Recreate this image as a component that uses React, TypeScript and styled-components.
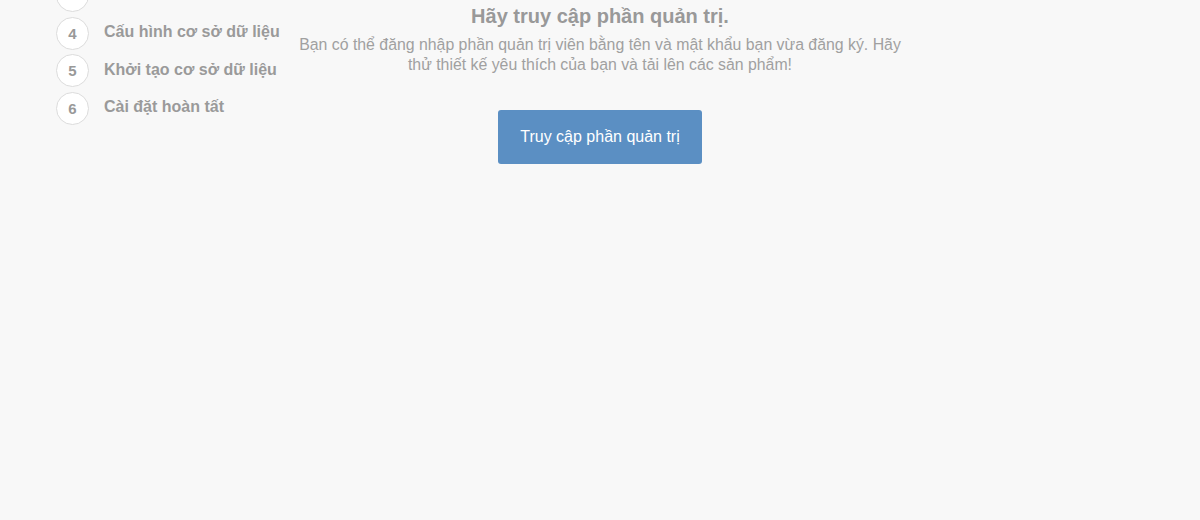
import { createGlobalStyle, styled } from "styled-components";

const GlobalStyle = createGlobalStyle`
  html, body {
    margin: 0;
    padding: 0;
    background: #f8f8f8;
    font-family: "Liberation Sans", Arial, sans-serif;
    overflow: hidden;
  }
`;

const Page = styled.div`
  display: grid;
  grid-template-columns: 1fr 620px 1fr;
  min-height: 520px;
  background: #f8f8f8;
`;

const Steps = styled.ul`
  list-style: none;
  margin: -21px 0 0;
  padding: 0 0 0 56px;
  display: flex;
  flex-direction: column;
  gap: 4.5px;
`;

const Step = styled.li`
  display: flex;
  align-items: center;
  gap: 15px;
  height: 33px;
`;

const Circle = styled.span`
  box-sizing: border-box;
  width: 33px;
  height: 33px;
  border-radius: 50%;
  border: 1px solid #dcdcdc;
  background: #fff;
  color: #999;
  font-weight: bold;
  font-size: 15px;
  display: flex;
  align-items: center;
  justify-content: center;
  flex-shrink: 0;
`;

const StepLabel = styled.span`
  color: #9a9a9a;
  font-weight: bold;
  font-size: 16px;
  margin-top: -2px;
  white-space: nowrap;
`;

const Content = styled.div`
  display: flex;
  flex-direction: column;
  align-items: center;
  text-align: center;
  padding-top: 4px;
`;

const Title = styled.h2`
  margin: 0;
  font-size: 20px;
  font-weight: bold;
  color: #999;
  line-height: 24px;
`;

const Text = styled.p`
  margin: 7px 0 0;
  font-size: 15.85px;
  line-height: 20px;
  color: #a0a0a0;
`;

const Button = styled.button`
  margin-top: 35px;
  width: 204px;
  height: 54px;
  border: none;
  border-radius: 3px;
  background: #5b8fc3;
  color: #fff;
  font-family: "Liberation Sans", Arial, sans-serif;
  font-size: 16px;
  cursor: pointer;
`;

const steps = [
  { n: 3, label: "" },
  { n: 4, label: "Cấu hình cơ sở dữ liệu" },
  { n: 5, label: "Khởi tạo cơ sở dữ liệu" },
  { n: 6, label: "Cài đặt hoàn tất" },
];

export default function App() {
  return (
    <>
      <GlobalStyle />
      <Page>
        <Steps>
          {steps.map((s) => (
            <Step key={s.n}>
              <Circle>{s.n === 3 ? "" : s.n}</Circle>
              <StepLabel>{s.label}</StepLabel>
            </Step>
          ))}
        </Steps>
        <Content>
          <Title>Hãy truy cập phần quản trị.</Title>
          <Text>
            Bạn có thể đăng nhập phần quản trị viên bằng tên và mật khẩu bạn vừa đăng ký. Hãy
            thử thiết kế yêu thích của bạn và tải lên các sản phẩm!
          </Text>
          <Button>Truy cập phần quản trị</Button>
        </Content>
        <div />
      </Page>
    </>
  );
}
